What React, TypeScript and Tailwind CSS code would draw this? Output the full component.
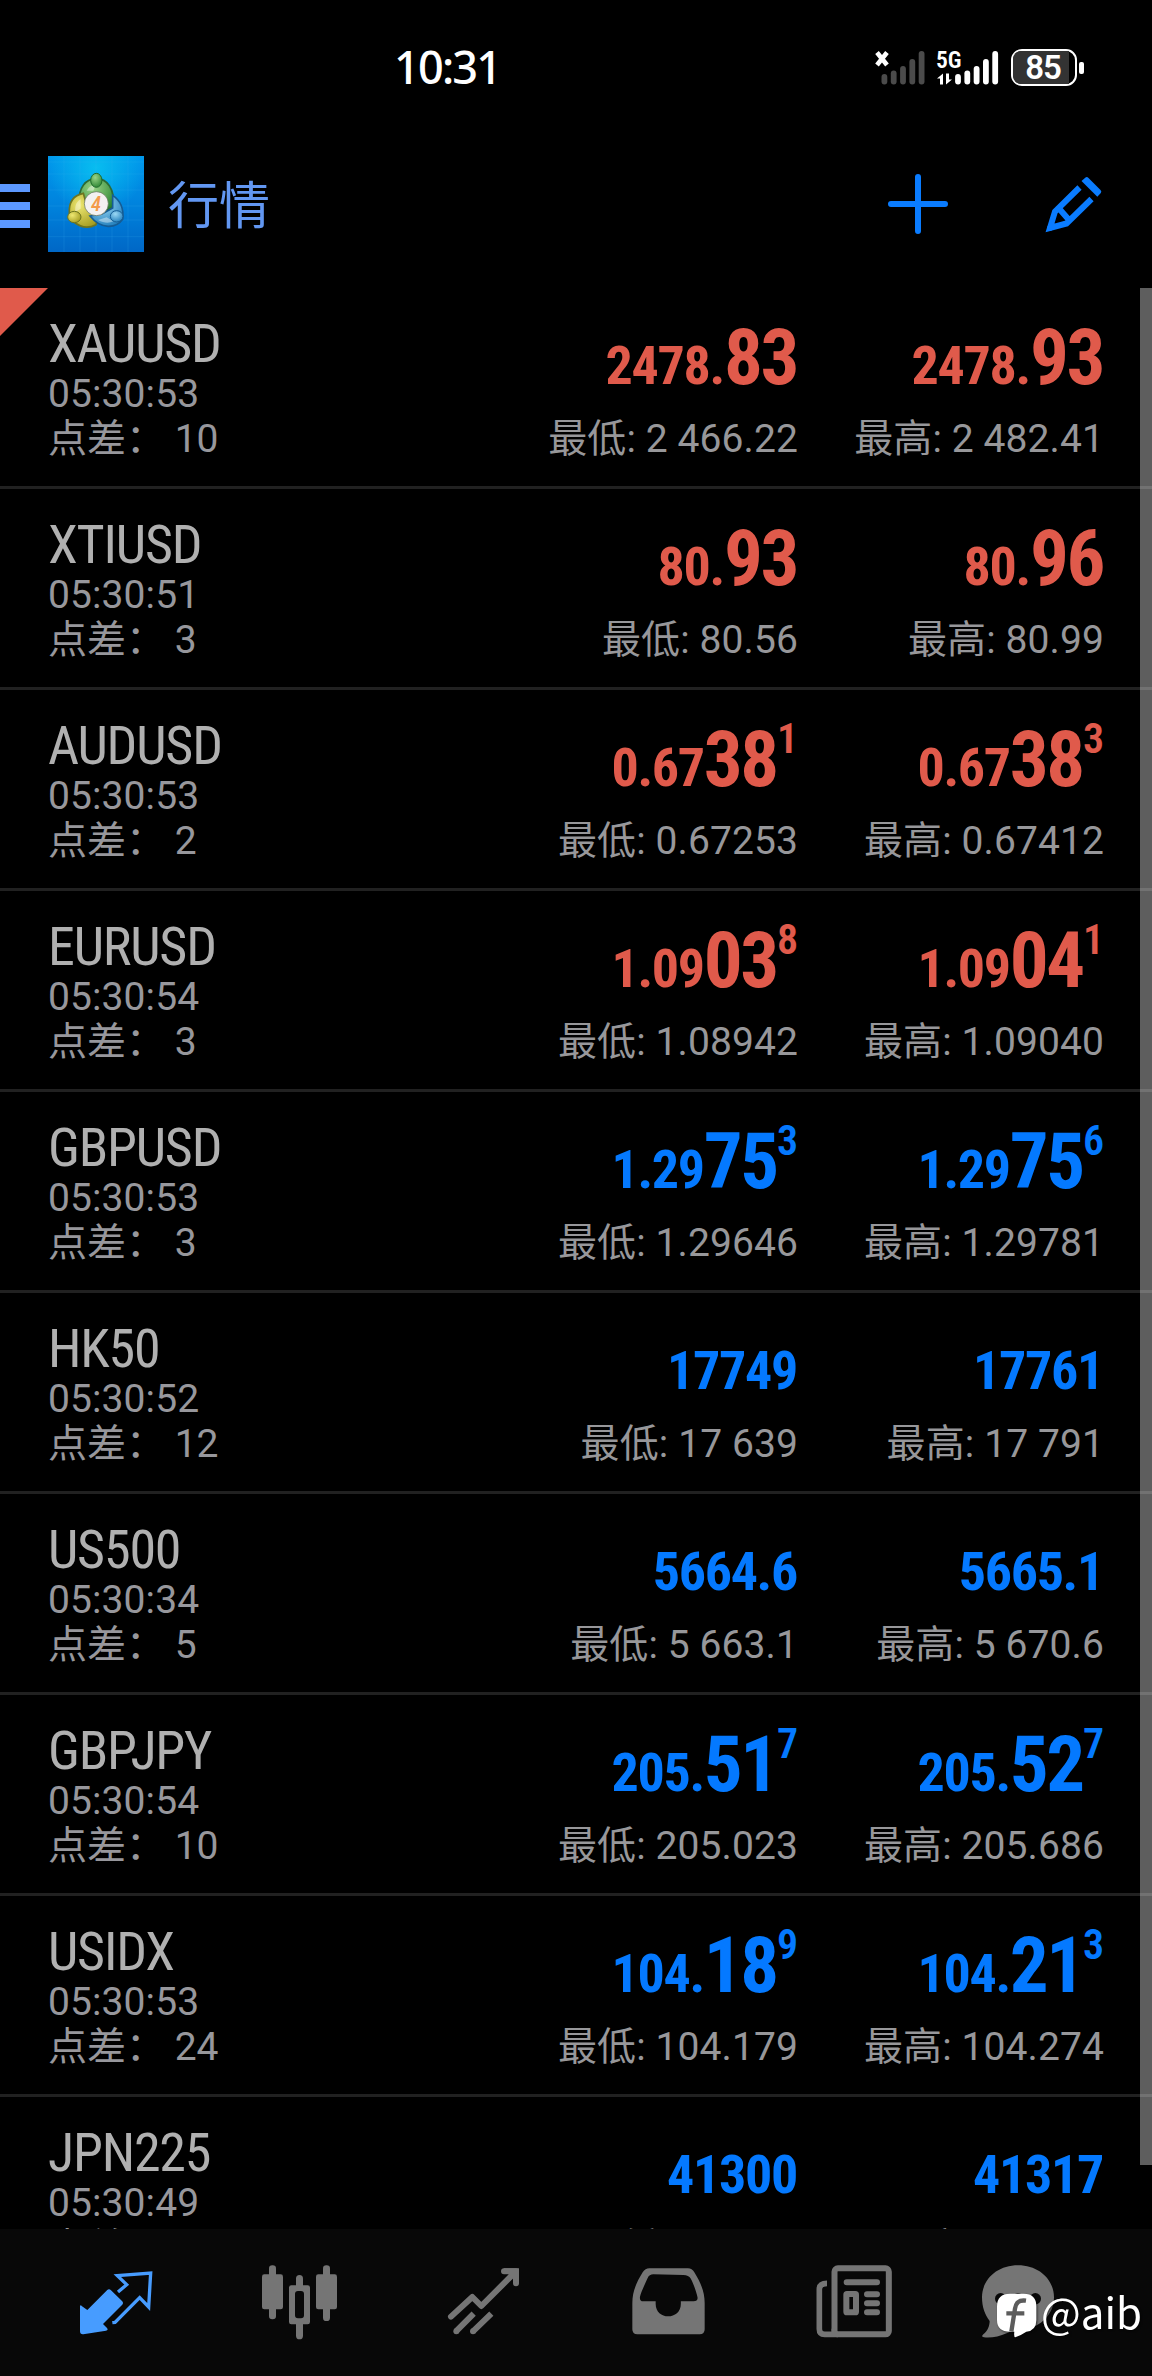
import { ReactNode } from 'react'

type Trend = 'up' | 'down'

interface Price {
  base: string
  big?: string
  sup?: string
}

interface Quote {
  symbol: string
  time: string
  spread: number
  trend: Trend
  bid: Price
  ask: Price
  low: string
  high: string
}

const QUOTES: Quote[] = [
  { symbol: 'XAUUSD', time: '05:30:53', spread: 10, trend: 'down', bid: { base: '2478.', big: '83' }, ask: { base: '2478.', big: '93' }, low: '2 466.22', high: '2 482.41' },
  { symbol: 'XTIUSD', time: '05:30:51', spread: 3, trend: 'down', bid: { base: '80.', big: '93' }, ask: { base: '80.', big: '96' }, low: '80.56', high: '80.99' },
  { symbol: 'AUDUSD', time: '05:30:53', spread: 2, trend: 'down', bid: { base: '0.67', big: '38', sup: '1' }, ask: { base: '0.67', big: '38', sup: '3' }, low: '0.67253', high: '0.67412' },
  { symbol: 'EURUSD', time: '05:30:54', spread: 3, trend: 'down', bid: { base: '1.09', big: '03', sup: '8' }, ask: { base: '1.09', big: '04', sup: '1' }, low: '1.08942', high: '1.09040' },
  { symbol: 'GBPUSD', time: '05:30:53', spread: 3, trend: 'up', bid: { base: '1.29', big: '75', sup: '3' }, ask: { base: '1.29', big: '75', sup: '6' }, low: '1.29646', high: '1.29781' },
  { symbol: 'HK50', time: '05:30:52', spread: 12, trend: 'up', bid: { base: '17749' }, ask: { base: '17761' }, low: '17 639', high: '17 791' },
  { symbol: 'US500', time: '05:30:34', spread: 5, trend: 'up', bid: { base: '5664.6' }, ask: { base: '5665.1' }, low: '5 663.1', high: '5 670.6' },
  { symbol: 'GBPJPY', time: '05:30:54', spread: 10, trend: 'up', bid: { base: '205.', big: '51', sup: '7' }, ask: { base: '205.', big: '52', sup: '7' }, low: '205.023', high: '205.686' },
  { symbol: 'USIDX', time: '05:30:53', spread: 24, trend: 'up', bid: { base: '104.', big: '18', sup: '9' }, ask: { base: '104.', big: '21', sup: '3' }, low: '104.179', high: '104.274' },
  { symbol: 'JPN225', time: '05:30:49', spread: 17, trend: 'up', bid: { base: '41300' }, ask: { base: '41317' }, low: '41 120', high: '41 370' },
]

const TREND_COLOR: Record<Trend, string> = {
  up: 'text-[#0479ff]',
  down: 'text-[#e05a4b]',
}

const BAR_TOPS = [34, 30.5, 26, 19, 11]

function SignalBars({ x, color }: { x: number; color: string }) {
  return (
    <g fill={color}>
      {BAR_TOPS.map((top, i) => (
        <rect key={i} x={x + i * 9.3} y={top} width="5.8" height={44.5 - top} rx="2.9" />
      ))}
    </g>
  )
}

function StatusBar() {
  return (
    <div className="flex h-[136px] items-start pl-[394px] pr-[68px]">
      <span className="mt-[43px] font-['Noto_Sans',sans-serif] text-[45px] leading-[48px] font-medium tracking-[-1.8px] text-white">
        10:31
      </span>
      <div className="ml-auto mt-[49px] flex items-center">
        <svg className="-mt-px mr-[9px] overflow-visible" width="130" height="37" viewBox="12.5 9 130 37">
          <path d="M17.5 12.5l10 12.5M27.5 12.5l-10 12.5" stroke="#fff" strokeWidth="4.6" />
          <SignalBars x={22} color="#4b4b4b" />
          <text x="76.5" y="28" fill="#fff" fontFamily="Roboto Condensed, Roboto, sans-serif" fontSize="23.5" fontWeight="600">
            5G
          </text>
          <path d="M83.5 44.500V33.500l-6 5h3v6zM86.500 33.500v11l6-5h-3v-6z" fill="#fff" />
          <SignalBars x={95.6} color="#fff" />
        </svg>
        <div className="flex h-[37px] w-[66px] rounded-[11px] border-[2.5px] border-white">
          <div className="flex w-[56px] items-center justify-center rounded-l-[8px] bg-[#333333] pl-[4px] font-[Roboto,sans-serif] text-[33px] leading-none font-semibold tracking-[-1px] text-white">
            85
          </div>
        </div>
        <div className="ml-[2px] h-[12px] w-[5px] rounded-[2px] bg-white" />
      </div>
    </div>
  )
}

function AppLogo() {
  return (
    <svg width="96" height="96" viewBox="0 0 288 288">
      <defs>
        <linearGradient id="sky" x1="0" y1="0" x2="0" y2="1">
          <stop offset="0" stopColor="#0098ec" />
          <stop offset="0.5" stopColor="#0083dd" />
          <stop offset="1" stopColor="#0067c6" />
        </linearGradient>
        <radialGradient id="glow" cx="0.5" cy="0.12" r="0.5">
          <stop offset="0" stopColor="#08bdf0" />
          <stop offset="1" stopColor="#08bdf0" stopOpacity="0" />
        </radialGradient>
        <radialGradient id="green" cx="0.4" cy="0.3" r="0.8">
          <stop offset="0" stopColor="#9ad487" />
          <stop offset="1" stopColor="#237f2c" />
        </radialGradient>
        <radialGradient id="yellow" cx="0.35" cy="0.35" r="0.8">
          <stop offset="0" stopColor="#eee873" />
          <stop offset="1" stopColor="#9c9418" />
        </radialGradient>
        <radialGradient id="blue" cx="0.4" cy="0.3" r="0.8">
          <stop offset="0" stopColor="#9bd8f4" />
          <stop offset="1" stopColor="#1878b8" />
        </radialGradient>
      </defs>
      <rect width="288" height="288" fill="url(#sky)" />
      <rect width="288" height="288" fill="url(#glow)" />
      <path
        d="M48 0v288M96 0v288M144 0v288M192 0v288M240 0v288M0 18h288M0 54h288M0 102h288M0 150h288M0 192h288M0 242h288"
        stroke="#3fb4f2"
        strokeOpacity="0.25"
        strokeWidth="2"
      />
      <g strokeWidth="5">
        <path d="M94 142C90 94 114 68 145 68s56 28 51 84l-22 12-26-52-30 16z" fill="url(#green)" stroke="#2c6b36" />
        <path d="M106 112C74 118 62 140 64 172l14 26c22 18 44 20 66 8l10-40-38-18z" fill="url(#yellow)" stroke="#6d7520" />
        <path d="M194 118c24 16 34 40 30 72-20 28-64 32-98-10l36-6 32-18z" fill="url(#blue)" stroke="#155c94" />
        <path d="M116 104c8-14 18-18 28-18l-8 18zM82 168c-2-20 4-32 16-38v28zM150 192c18 10 34 10 46 4l-20-12z" fill="#fff" fillOpacity="0.4" />
      </g>
      <ellipse cx="145" cy="73" rx="17" ry="21" fill="url(#green)" stroke="#1f6a2a" strokeWidth="3" />
      <ellipse cx="79" cy="183" rx="20" ry="17" fill="url(#yellow)" stroke="#6d7520" strokeWidth="3" />
      <ellipse cx="206" cy="181" rx="19" ry="17" fill="url(#blue)" stroke="#155c94" strokeWidth="3" />
      <circle cx="145" cy="143" r="36" fill="#f3f1f1" stroke="#5c6b52" strokeWidth="2" />
      <text x="144" y="165" textAnchor="middle" fill="#f49a4a" fontFamily="Roboto Condensed, Roboto, sans-serif" fontSize="62" fontWeight="500" fontStyle="italic">
        4
      </text>
    </svg>
  )
}

function Header() {
  return (
    <header className="flex h-[152px] items-center pb-[16px] pr-[48px]">
      <div className="mt-[4px] mr-[18px] flex flex-col gap-[10px]">
        <div className="h-[8px] w-[30px] bg-[#5c98ff]" />
        <div className="h-[8px] w-[30px] bg-[#5c98ff]" />
        <div className="h-[8px] w-[30px] bg-[#5c98ff]" />
      </div>
      <AppLogo />
      <h1 className="ml-[24px] pb-[4px] font-['Noto_Sans_CJK_SC',sans-serif] text-[51px] leading-[60px] text-[#6297f2]">行情</h1>
      <svg className="ml-auto" width="62" height="62" viewBox="0 0 62 62">
        <path d="M31 4v54M4 31h54" stroke="#0a7cff" strokeWidth="6" strokeLinecap="round" />
      </svg>
      <svg className="ml-[95px]" width="60" height="60" viewBox="1044 174 60 60">
        <path d="M1081.5 181l4-3.5q1.5-1 3 .5l12 12q1.5 1.5.3 3l-3.5 3.8z" fill="#0a7cff" />
        <path d="M1079.5 187.5L1055 211.5 1050 228l16.5-4.5 25-24.5M1059 208.5L1069.5 220.5" fill="none" stroke="#0a7cff" strokeWidth="6" />
        <path d="M1047 226v5h5z" fill="#0a7cff" />
      </svg>
    </header>
  )
}

function PriceColumn({ price, trend, label, value }: { price: Price; trend: Trend; label: string; value: string }) {
  return (
    <div className="w-[306px] shrink-0 pt-[26px] text-right whitespace-nowrap">
      <div className={`pr-px font-['Roboto_Condensed',Roboto,sans-serif] text-[54px] leading-[103px] font-bold tracking-[-1.3px] ${TREND_COLOR[trend]}`}>
        {price.base}
        {price.big && <span className="text-[77px] leading-none tracking-[-2.4px]">{price.big}</span>}
        {price.sup && <span className="relative -top-[33px] text-[42px] leading-none font-semibold tracking-[-1px]">{price.sup}</span>}
      </div>
      <div className="text-[39px] leading-[45px] tracking-[0.1px] text-[#97979a]">
        {label}: {value}
      </div>
    </div>
  )
}

function QuoteRow({ quote }: { quote: Quote }) {
  return (
    <div className="flex h-[201px] shrink-0 border-b-[3px] border-[#212121] pl-[48px] pr-[48px]">
      <div className="flex-1 pt-[28px] whitespace-nowrap">
        <div className="font-['Roboto_Condensed',Roboto,sans-serif] text-[54px] leading-[56px] tracking-[-1.2px] text-[#b0b0b0]">
          {quote.symbol}
        </div>
        <div className="text-[39px] leading-[45px] tracking-[0.1px] text-[#97979c]">{quote.time}</div>
        <div className="text-[39px] leading-[45px] text-[#97979c]">点差： {quote.spread}</div>
      </div>
      <PriceColumn price={quote.bid} trend={quote.trend} label="最低" value={quote.low} />
      <PriceColumn price={quote.ask} trend={quote.trend} label="最高" value={quote.high} />
    </div>
  )
}

function TabIcon({ viewBox, children }: { viewBox: string; children: ReactNode }) {
  return (
    <button className="flex w-[184px] justify-center">
      <svg width="110" height="90" viewBox={viewBox}>
        {children}
      </svg>
    </button>
  )
}

function TabBar() {
  return (
    <nav className="relative flex h-[147px] items-center bg-[#080808] px-[24px] pt-2">
      {/* Quotes (active) */}
      <TabIcon viewBox="183 545 330 270">
        <path d="M240 678q1-7 6 0l16 11 59-59q6-6 12 0l33 32q6 6 0 12l-57 57 12 12q5 6-3 8l-68 11q-10 1-10-9z" fill="#479cff" />
        <path d="M354 635l26-22-28-27 100-8-6 102-27-28-74 74-8 1" fill="none" stroke="#479cff" strokeWidth="10" />
      </TabIcon>
      {/* Charts */}
      <TabIcon viewBox="735 545 330 270">
        <g fill="#757575">
          <rect x="786" y="582" width="63" height="105" rx="7" />
          <rect x="807" y="555" width="21" height="162" rx="10" />
          <rect x="948" y="582" width="63" height="105" rx="7" />
          <rect x="969" y="555" width="21" height="167" rx="10" />
          <path d="M888 615v-20q0-11 10.5-11t10.5 11v20h14q7 0 7 7v103q0 7-7 7h-14v34q0 11-10.5 11t-10.5-11v-34h-14q-7 0-7-7V622q0-7 7-7zM894 632q-9 0-9 9v64q0 9 9 9h9q9 0 9-9v-64q0-9-9-9z" fillRule="evenodd" />
        </g>
      </TabIcon>
      {/* Trade */}
      <TabIcon viewBox="87 545 330 270">
        <g fill="none" stroke="#757575" strokeWidth="18">
          <path d="M153 709l64-59 27 27 98-98M312 573h36v36" strokeLinecap="round" strokeLinejoin="round" />
          <path d="M332 573h16v16z" fill="#757575" />
          <path d="M168 753l53-53M219 753l55-53" />
        </g>
        <circle cx="169" cy="753" r="9" fill="#757575" />
        <circle cx="219" cy="753" r="9" fill="#757575" />
      </TabIcon>
      {/* History */}
      <TabIcon viewBox="639 545 330 270">
        <path
          d="M748 564h116q12 0 19 12c18 30 31 56 31 92v79q0 15-15 15H712q-15 0-15-15v-79c0-36 13-62 31-92q8-12 20-12zM760 582q-12 0-17 11c-6 14-20 42-23 56q-2 14 10 14h37v8c0 24 18 37 37.500 37s38-13 38-37v-8h38q14 0 12-12c-4-20-14-44-20-56q-7-11-22-11z"
          fill="#757575"
          fillRule="evenodd"
        />
      </TabIcon>
      {/* News */}
      <TabIcon viewBox="51 545 330 270">
        <g fill="none" stroke="#757575" strokeWidth="18">
          <rect x="163.5" y="564" width="163" height="198" rx="10" />
          <path d="M141 609q-23 0-23 18v119q0 16 16 16h40" strokeWidth="17" />
          <path d="M159 745v18" strokeWidth="9" />
          <rect x="199" y="641" width="29" height="55" rx="2" />
          <path d="M200 606h91M261 642h30M261 669h30M261 696h30" strokeLinecap="round" />
        </g>
      </TabIcon>
      {/* Messages */}
      <TabIcon viewBox="603 545 330 270">
        <path d="M714 555c62 0 108 42 108 96s-46 98-108 98c-12 0-22 4-34 10-22 10-46 14-68 12-7-1-7-5-2-9 13-10 19-26 19-40-14-18-23-42-23-71 0-54 46-96 108-96z" fill="#757575" />
        <g fill="#080808">
          <circle cx="662" cy="655" r="17" />
          <circle cx="714" cy="655" r="17" />
          <circle cx="766" cy="655" r="17" />
        </g>
      </TabIcon>
      <div className="absolute top-[58px] left-[996px] flex items-start [filter:drop-shadow(1px_1px_1px_rgba(0,0,0,0.6))]">
        <svg className="mt-[5px]" width="42" height="48" viewBox="0 0 126 144">
          <path d="M42 5h41q38 0 38 38v41q0 32-30 35Q78 128 58 136q-5 0-3-17H42Q3 119 3 84V43Q3 5 42 5z" fill="#fff" />
          <path d="M90 26c-22-3-30 6-33 24L46 119M31 64h54" fill="none" stroke="#5c5c5c" strokeWidth="13" />
        </svg>
        <span className="-mt-[3px] ml-[3px] font-['Noto_Sans_CJK_SC',sans-serif] text-[42px] leading-[54px] text-white">@aib</span>
      </div>
    </nav>
  )
}

export default function App() {
  return (
    <div className="flex h-[2376px] w-[1152px] flex-col overflow-hidden bg-black font-[Roboto,'Noto_Sans_CJK_SC',sans-serif]">
      <StatusBar />
      <Header />
      <main className="relative flex min-h-0 flex-1 flex-col overflow-hidden">
        <svg className="absolute top-0 left-0" width="48" height="48" viewBox="0 0 48 48">
          <path d="M0 0h48L0 48z" fill="#e05a4b" />
        </svg>
        {QUOTES.map((quote) => (
          <QuoteRow key={quote.symbol} quote={quote} />
        ))}
        <div className="absolute top-0 right-0 h-[1877px] w-[12px] bg-white/37" />
      </main>
      <TabBar />
    </div>
  )
}
